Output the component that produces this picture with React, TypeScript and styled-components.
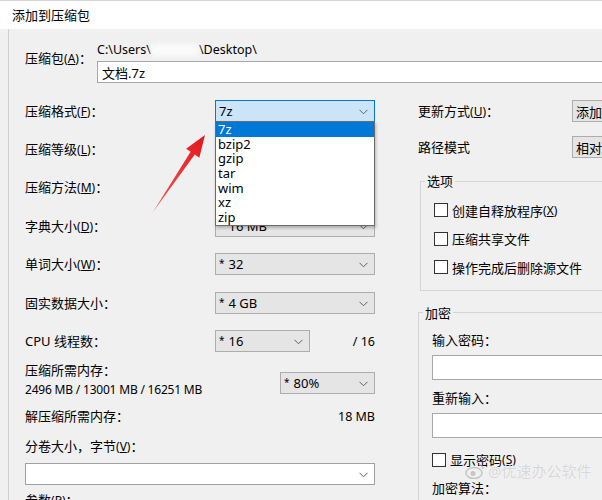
import React from 'react';
import styled, { createGlobalStyle } from 'styled-components';

const GlobalStyle = createGlobalStyle`
  html, body { margin: 0; padding: 0; background: #f0f0f0; }
  body {
    font-family: "Noto Sans", "Noto Sans CJK SC", sans-serif;
    font-size: 13px;
    color: #000;
  }
  * { box-sizing: border-box; }
`;

const Window = styled.div`
  position: relative;
  width: 602px;
  height: 500px;
  overflow: hidden;
  background: #f0f0f0;
`;

const TitleBar = styled.div`
  height: 29px;
  border-top: 1px solid #d6d6d6;
  background: #fff;
  display: flex;
  align-items: center;
  padding-left: 12px;
  font-size: 13px;
  line-height: 1;
`;

const Frame = styled.div`
  margin-left: 8px;
  border-left: 1px solid #cfcfcf;
  padding: 12px 0 0 16px;
  height: 471px;
  background: #f0f0f0;
`;

const ArchiveRow = styled.div`
  display: grid;
  grid-template-columns: 72px 1fr;
`;

const ArchiveLabel = styled.div`
  grid-row: 1 / span 2;
  margin-top: 8px;
  line-height: 18px;
`;

const PathText = styled.div`
  line-height: 18px;
  font-size: 12.5px;
  white-space: nowrap;
  display: flex;
  align-items: center;
`;

const Blur = styled.span`
  display: inline-block;
  width: 48px;
  height: 12px;
  background: #fbfbfb;
  filter: blur(2px);
`;

const TextBox = styled.div<{ $w: number; $h?: number }>`
  width: ${p => p.$w}px;
  height: ${p => p.$h ?? 22}px;
  background: #fff;
  border: 1px solid #a8a8a8;
  display: flex;
  align-items: center;
  padding-left: 4px;
  font-size: 13px;
  flex-shrink: 0;
`;

const Main = styled.div`
  display: flex;
  margin-top: 9px;
`;

const LeftCol = styled.div`
  width: 350px;
  flex-shrink: 0;
  display: flex;
  flex-direction: column;
`;

const RightCol = styled.div`
  margin-left: 43px;
  width: 240px;
  flex-shrink: 0;
  display: flex;
  flex-direction: column;
`;

const FieldRow = styled.div<{ $h?: number }>`
  height: ${p => p.$h ?? 38.33}px;
  display: flex;
  align-items: center;
  flex-shrink: 0;
`;

const Label = styled.div<{ $w?: number }>`
  width: ${p => (p.$w ? `${p.$w}px` : 'auto')};
  flex-shrink: 0;
  white-space: nowrap;
  line-height: 20px;
`;

const Select = styled.div<{ $w: number; $focus?: boolean }>`
  position: relative;
  width: ${p => p.$w}px;
  height: 22px;
  flex-shrink: 0;
  display: flex;
  align-items: center;
  padding-left: 3px;
  background: ${p => (p.$focus ? '#cce4f7' : '#e5e5e5')};
  border: 1px solid ${p => (p.$focus ? '#0078d7' : '#adadad')};
  font-size: 13px;
  white-space: nowrap;
`;

const WhiteSelect = styled(Select)`
  background: #fff;
  border-color: #a0a0a0;
`;

const Chevron = styled.svg`
  position: absolute;
  right: 6px;
  top: 8px;
`;

const Star = styled.span`
  font-size: 10px;
  margin-right: 4px;
  position: relative;
  top: -2px;
`;

const RightText = styled.div`
  flex: 1;
  text-align: right;
  font-size: 12.5px;
`;

const MemoryRow = styled.div`
  display: flex;
  justify-content: space-between;
  align-items: center;
  height: 40px;
`;

const MemSelect = styled(Select)`
  margin-top: 6px;
`;

const SmallText = styled.div`
  font-size: 12px;
  line-height: 20px;
  white-space: nowrap;
  letter-spacing: -0.2px;
`;

const Spaced = styled.div<{ $top: number }>`
  margin-top: ${p => p.$top}px;
  flex-shrink: 0;
`;

const Group = styled.fieldset<{ $left: number }>`
  margin: 0 0 0 ${p => p.$left}px;
  border: 1px solid #d5d5d5;
  border-right: none;
  padding: 0 0 8px 13px;
  min-width: 0;
`;

const Legend = styled.legend`
  padding: 0 2px;
  margin-left: -9px;
  line-height: 18px;
`;

const CheckRow = styled.div<{ $h?: number }>`
  height: ${p => p.$h ?? 28.5}px;
  display: flex;
  align-items: center;
  white-space: nowrap;
`;

const Box = styled.span`
  width: 14px;
  height: 14px;
  border: 1px solid #333;
  background: #fff;
  margin-right: 4px;
  flex-shrink: 0;
`;

const DropList = styled.div`
  position: absolute;
  left: 215px;
  top: 121px;
  width: 160px;
  background: #fff;
  border: 1px solid #6b6b6b;
  box-shadow: 1px 2px 3px rgba(0, 0, 0, 0.25);
  z-index: 2;
`;

const DropItem = styled.div<{ $active?: boolean }>`
  height: 14.7px;
  line-height: 14.7px;
  padding-left: 2px;
  font-size: 13px;
  background: ${p => (p.$active ? '#0078d7' : 'transparent')};
  color: ${p => (p.$active ? '#fff' : '#000')};
`;

const Overlay = styled.svg`
  position: absolute;
  left: 0;
  top: 0;
  pointer-events: none;
  z-index: 3;
`;

const Watermark = styled.div`
  position: absolute;
  left: 465px;
  top: 460px;
  display: flex;
  align-items: center;
  gap: 3px;
  font-size: 15px;
  color: rgba(190, 190, 190, 0.6);
  text-shadow: 0 0 1px #fff;
  z-index: 3;
  white-space: nowrap;
`;

const Down = () => (
  <Chevron width="9" height="6" viewBox="0 0 9 6">
    <path d="M0.5 0.8 L4.5 4.8 L8.5 0.8" fill="none" stroke="#606060" strokeWidth="1" />
  </Chevron>
);

const M = ({ k }: { k: string }) => (
  <span style={{ fontSize: 12 }}>(<u>{k}</u>)</span>
);

type Combo = { label: React.ReactNode; value: string };

// values of the rows hidden under the open list are left out
const combos: Array<Combo> = [
  { label: <>压缩格式<M k="F" />：</>, value: '7z' },
  { label: <>压缩等级<M k="L" />：</>, value: '' },
  { label: <>压缩方法<M k="M" />：</>, value: '' },
  { label: <>字典大小<M k="D" />：</>, value: '* 16 MB' },
  { label: <>单词大小<M k="W" />：</>, value: '* 32' },
  { label: <>固实数据大小：</>, value: '* 4 GB' },
];

const formats = ['7z', 'bzip2', 'gzip', 'tar', 'wim', 'xz', 'zip'];

function Value({ text }: { text: string }) {
  if (text.startsWith('* ')) {
    return (
      <span>
        <Star>*</Star>
        {text.slice(2)}
      </span>
    );
  }
  return <span>{text}</span>;
}

export default function App(): React.ReactElement {
  return (
    <Window>
      <GlobalStyle />
      <TitleBar>添加到压缩包</TitleBar>
      <Frame>
        <ArchiveRow>
          <ArchiveLabel>压缩包<M k="A" />：</ArchiveLabel>
          <PathText>
            C:\Users\<Blur />\Desktop\
          </PathText>
          <TextBox $w={520} style={{ marginTop: 2 }}>文档.7z</TextBox>
        </ArchiveRow>

        <Main>
          <LeftCol>
            {combos.map((c, i) => (
              <FieldRow key={i}>
                <Label $w={190}>{c.label}</Label>
                <Select $w={160} $focus={i === 0}>
                  <Value text={c.value} />
                  <Down />
                </Select>
              </FieldRow>
            ))}
            <FieldRow>
              <Label $w={190}>CPU 线程数：</Label>
              <Select $w={95}>
                <Value text="* 16" />
                <Down />
              </Select>
              <RightText>/ 16</RightText>
            </FieldRow>

            <MemoryRow>
              <div>
                <Label>压缩所需内存：</Label>
                <SmallText>2496 MB / 13001 MB / 16251 MB</SmallText>
              </div>
              <MemSelect $w={95}>
                <Value text="* 80%" />
                <Down />
              </MemSelect>
            </MemoryRow>

            <Spaced $top={6}>
              <FieldRow $h={20}>
                <Label>解压缩所需内存：</Label>
                <RightText>18 MB</RightText>
              </FieldRow>
            </Spaced>

            <Spaced $top={10}>
              <Label>分卷大小，字节<M k="V" />：</Label>
            </Spaced>
            <Spaced $top={6}>
              <WhiteSelect $w={350}>
                <span />
                <Down />
              </WhiteSelect>
            </Spaced>
            <Spaced $top={5}>
              <Label>参数<M k="P" />：</Label>
            </Spaced>
          </LeftCol>

          <RightCol>
            <FieldRow $h={38}>
              <Label $w={154}>更新方式<M k="U" />：</Label>
              <Select $w={100}>添加并替换文件</Select>
            </FieldRow>
            <FieldRow $h={34}>
              <Label $w={154}>路径模式</Label>
              <Select $w={100}>相对路径</Select>
            </FieldRow>

            <Spaced $top={8}>
              <Group $left={2}>
                <Legend>选项</Legend>
                <div style={{ height: 6 }} />
                <CheckRow>
                  <Box />创建自释放程序<M k="X" />
                </CheckRow>
                <CheckRow>
                  <Box />压缩共享文件
                </CheckRow>
                <CheckRow>
                  <Box />操作完成后删除源文件
                </CheckRow>
              </Group>
            </Spaced>

            <Spaced $top={13}>
              <Group $left={0}>
                <Legend>加密</Legend>
                <Spaced $top={8}>
                  <Label>输入密码：</Label>
                </Spaced>
                <Spaced $top={5}>
                  <TextBox $w={200} $h={25} />
                </Spaced>
                <Spaced $top={8}>
                  <Label>重新输入：</Label>
                </Spaced>
                <Spaced $top={5}>
                  <TextBox $w={200} $h={25} />
                </Spaced>
                <Spaced $top={12}>
                  <CheckRow $h={20}>
                    <Box />显示密码<M k="S" />
                  </CheckRow>
                </Spaced>
                <Spaced $top={8}>
                  <Label>加密算法：</Label>
                </Spaced>
              </Group>
            </Spaced>
          </RightCol>
        </Main>
      </Frame>

      <DropList>
        {formats.map((f, i) => (
          <DropItem key={f} $active={i === 0}>{f}</DropItem>
        ))}
      </DropList>

      <Overlay width="602" height="500" viewBox="0 0 602 500">
        <defs>
          <linearGradient id="arrowFill" x1="153" y1="212" x2="205" y2="135" gradientUnits="userSpaceOnUse">
            <stop offset="0" stopColor="#f25a4f" />
            <stop offset="1" stopColor="#e3161b" />
          </linearGradient>
        </defs>
        <polygon
          points="153,212 194.8,154.6 199.3,157.7 205,135 186.1,148.7 190.6,151.8"
          fill="url(#arrowFill)"
        />
      </Overlay>

      <Watermark>
        <svg width="20" height="16" viewBox="0 0 20 16">
          <ellipse cx="9" cy="10" rx="8" ry="5.5" fill="none" stroke="rgba(180,180,180,0.7)" strokeWidth="1.5" />
          <circle cx="8" cy="10.5" r="2.5" fill="rgba(180,180,180,0.7)" />
          <path d="M14 2 Q18 2 18 6" fill="none" stroke="rgba(180,180,180,0.7)" strokeWidth="1.5" />
        </svg>
        <span>@优速办公软件</span>
      </Watermark>
    </Window>
  );
}
